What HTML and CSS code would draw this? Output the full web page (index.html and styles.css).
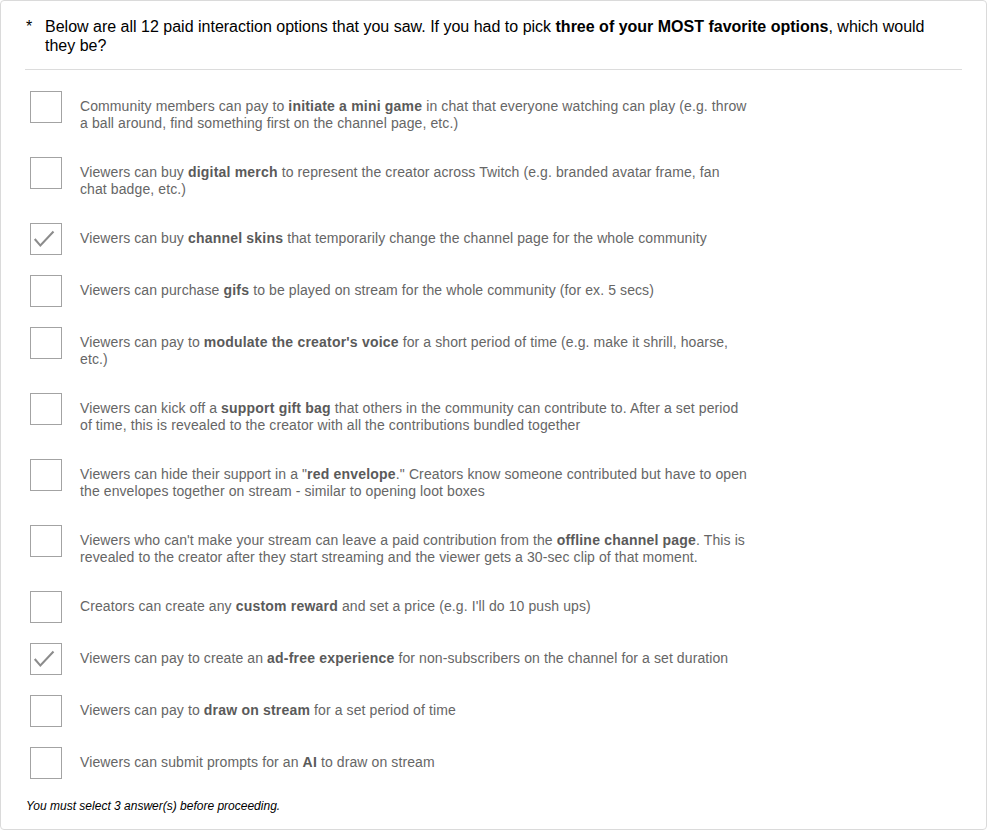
FILE: index.html
```html
<!DOCTYPE html>
<html lang="en">
<head>
  <meta charset="UTF-8">
  <title>Paid interaction options</title>
  <link rel="stylesheet" href="styles.css">
</head>
<body>

  <div class="question">
    <div class="question-head">
      <span class="required">*</span>
      <p class="question-text">Below are all 12 paid interaction options that you saw. If you had to pick <b>three of your MOST favorite options</b>, which would they be?</p>
    </div>
    <hr class="divider">

    <ul class="options">
      <li class="option">
        <span class="box"></span>
        <span class="label">Community members can pay to <b>initiate a mini game</b> in chat that everyone watching can play (e.g. throw a ball around, find something first on the channel page, etc.)</span>
      </li>
      <li class="option">
        <span class="box"></span>
        <span class="label">Viewers can buy <b>digital merch</b> to represent the creator across Twitch (e.g. branded avatar frame, fan chat badge, etc.)</span>
      </li>
      <li class="option">
        <span class="box checked">
          <svg viewBox="0 0 32 32" width="30" height="30"><path d="M4 16 L10 23 L24 8"/></svg>
        </span>
        <span class="label">Viewers can buy <b>channel skins</b> that temporarily change the channel page for the whole community</span>
      </li>
      <li class="option">
        <span class="box"></span>
        <span class="label">Viewers can purchase <b>gifs</b> to be played on stream for the whole community (for ex. 5 secs)</span>
      </li>
      <li class="option">
        <span class="box"></span>
        <span class="label">Viewers can pay to <b>modulate the creator's voice</b> for a short period of time (e.g. make it shrill, hoarse, etc.)</span>
      </li>
      <li class="option">
        <span class="box"></span>
        <span class="label">Viewers can kick off a <b>support gift bag</b> that others in the community can contribute to. After a set period of time, this is revealed to the creator with all the contributions bundled together</span>
      </li>
      <li class="option">
        <span class="box"></span>
        <span class="label">Viewers can hide their support in a "<b>red envelope</b>." Creators know someone contributed but have to open the envelopes together on stream - similar to opening loot boxes</span>
      </li>
      <li class="option">
        <span class="box"></span>
        <span class="label">Viewers who can't make your stream can leave a paid contribution from the <b>offline channel page</b>. This is revealed to the creator after they start streaming and the viewer gets a 30-sec clip of that moment.</span>
      </li>
      <li class="option">
        <span class="box"></span>
        <span class="label">Creators can create any <b>custom reward</b> and set a price (e.g. I'll do 10 push ups)</span>
      </li>
      <li class="option">
        <span class="box checked">
          <svg viewBox="0 0 32 32" width="30" height="30"><path d="M4 16 L10 23 L24 8"/></svg>
        </span>
        <span class="label">Viewers can pay to create an <b>ad-free experience</b> for non-subscribers on the channel for a set duration</span>
      </li>
      <li class="option">
        <span class="box"></span>
        <span class="label">Viewers can pay to <b>draw on stream</b> for a set period of time</span>
      </li>
      <li class="option">
        <span class="box"></span>
        <span class="label">Viewers can submit prompts for an <b>AI</b> to draw on stream</span>
      </li>
    </ul>

    <p class="error">You must select 3 answer(s) before proceeding.</p>
  </div>

</body>
</html>
```

FILE: styles.css
```css
body {
  margin: 0;
  font-family: "Liberation Sans", Arial, sans-serif;
  background: #fff;
}

.question {
  box-sizing: border-box;
  height: 830px;
  border: 1px solid #dadada;
  border-radius: 4px;
  padding: 16px 24px 0 24px;
}

.question-head {
  display: flex;
  font-size: 16px;
  line-height: 19px;
  color: #000;
}

.required {
  width: 19px;
  flex: none;
  padding-left: 1px;
}

.question-text {
  margin: 0;
  padding-right: 20px;
}

.divider {
  border: 0;
  border-top: 1px solid #dcdcdc;
  margin: 14px 0 21px 0;
}

.options {
  list-style: none;
  margin: 0;
  padding: 0 0 0 5px;
}

.option {
  display: flex;
  align-items: flex-start;
  margin-bottom: 20px;
}

.box {
  box-sizing: border-box;
  width: 32px;
  height: 32px;
  flex: none;
  border: 1px solid #a3a3a3;
  background: #fff;
}

.box svg {
  display: block;
}

.box path {
  fill: none;
  stroke: #8c8c8c;
  stroke-width: 2.2;
}

.label {
  width: 669px;
  margin-left: 18px;
  padding: 7px 0 5px 0;
  font-size: 14px;
  line-height: 17px;
  letter-spacing: 0.1px;
  color: #666;
}

.label b {
  color: #5a5a5a;
  letter-spacing: 0.2px;
}

.error {
  margin: 0;
  font-size: 12px;
  line-height: 14px;
  font-style: italic;
  color: #000;
  padding-left: 1px;
}
```
